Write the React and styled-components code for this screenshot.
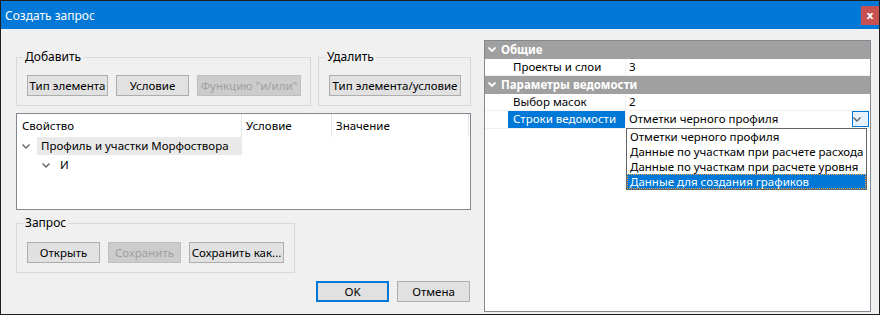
import React from 'react'
import styled, { createGlobalStyle } from 'styled-components'

const GlobalStyle = createGlobalStyle`
    * {
        box-sizing: border-box;
    }

    html, body {
        margin: 0;
        padding: 0;
        background: #f0f0f0;
    }

    body {
        font-family: "Noto Sans", "Open Sans", sans-serif;
        font-size: 11.5px;
        color: #000;
    }
`

const Window = styled.div`
    display: flex;
    flex-direction: column;
    width: 880px;
    height: 315px;
    border: 1px solid #1e1e1e;
    background: #f0f0f0;
`

const TitleBar = styled.div`
    display: flex;
    align-items: center;
    justify-content: space-between;
    height: 28px;
    padding-left: 4px;
    background: #0078d7;
`

const Title = styled.span`
    color: #fff;
    font-size: 12px;
`

const CloseButton = styled.div`
    display: flex;
    align-items: center;
    justify-content: center;
    width: 18px;
    height: 19px;
    margin-top: 1px;
    background: #c75050;
    color: #fff;
    font: bold 11px "DejaVu Sans", sans-serif;
`

const Body = styled.div`
    display: flex;
    gap: 13px;
    flex: 1;
    padding: 11px 8px 0 15px;
`

const LeftColumn = styled.div`
    display: flex;
    flex-direction: column;
    width: 455px;
    padding-top: 9px;
`

const GroupRow = styled.div`
    display: flex;
    gap: 7px;
`

const Group = styled.fieldset`
    display: flex;
    gap: 8px;
    width: ${(p) => p.$width}px;
    min-width: 0;
    margin: ${(p) => p.$top || 0}px 0 0;
    padding: ${(p) => p.$padTop || 10}px 0 9px 10px;
    border: 1px solid #d9d9d9;
`

const Legend = styled.legend`
    margin-left: -4px;
    padding: 0 2px;
    font-size: 12px;
    line-height: 16px;
`

const Button = styled.button`
    flex: 0 0 auto;
    width: ${(p) => p.$width}px;
    height: 21px;
    padding: 0;
    border: 1px solid ${(p) => (p.$primary ? '#0078d7' : p.disabled ? '#bfbfbf' : '#adadad')};
    box-shadow: ${(p) => (p.$primary ? 'inset 0 0 0 1px #0078d7' : 'none')};
    background: ${(p) => (p.disabled ? '#cccccc' : '#e1e1e1')};
    color: ${(p) => (p.disabled ? '#a0a0a0' : '#000')};
    font: inherit;
    white-space: nowrap;
    overflow: hidden;
`

const TreeList = styled.div`
    height: 97px;
    margin-top: 7px;
    border: 1px solid #828790;
    background: #fff;
`

const TreeGrid = styled.div`
    display: grid;
    grid-template-columns: 225px 90px 137px 1fr;
    height: ${(p) => p.$height}px;
`

const HeaderCell = styled.div`
    display: flex;
    align-items: center;
    padding-left: ${(p) => (p.$first ? 5 : 4)}px;
    border-right: ${(p) => (p.$plain ? 'none' : '1px solid #e5e5e5')};
`

const NodeCell = styled.div`
    display: flex;
    align-items: center;
    padding-left: ${(p) => p.$indent}px;
`

const Expander = styled.svg`
    flex: 0 0 auto;
    width: 8px;
    height: 5px;
    margin-right: 7px;
`

const NodeLabel = styled.span`
    flex: 1;
    height: 18px;
    padding-left: ${(p) => p.$pad}px;
    line-height: 18px;
    background: ${(p) => (p.$hot ? '#e9e9e9' : 'transparent')};
`

const Footer = styled.div`
    display: flex;
    justify-content: flex-end;
    gap: 8px;
    margin-top: 8px;
    padding-right: 1px;
`

const PropertyPanel = styled.div`
    width: 387px;
    height: 272px;
    border: 1px solid #828790;
    background: #fff;
`

const CategoryRow = styled.div`
    display: flex;
    align-items: center;
    gap: 5px;
    height: 17.5px;
    padding-left: 3px;
    background: #a0a0a0;
    color: #fff;
    font-weight: bold;
`

const PropRow = styled.div`
    display: grid;
    grid-template-columns: 141px 1fr;
    height: 17.5px;
    border-bottom: 1px solid #f0f0f0;
`

const PropName = styled.div`
    display: flex;
    padding-left: 23px;
    border-right: 1px solid #f0f0f0;
`

const PropNameText = styled.span`
    flex: 1;
    padding-left: 5px;
    line-height: 16px;
    background: ${(p) => (p.$selected ? '#0078d7' : 'transparent')};
    color: ${(p) => (p.$selected ? '#fff' : '#000')};
`

const PropValue = styled.div`
    position: relative;
    display: flex;
    align-items: center;
    padding-left: 3px;
    line-height: 16px;
`

const ValueText = styled.span`
    flex: 1;
`

const DropButton = styled.div`
    display: flex;
    align-items: center;
    justify-content: center;
    width: 17px;
    height: 16px;
    margin-right: 1px;
    border: 1px solid #0078d7;
    background: #e5f1fb;
`

const DropList = styled.ul`
    position: absolute;
    top: 100%;
    left: 0;
    z-index: 2;
    width: 241px;
    margin: 0;
    padding: 0;
    list-style: none;
    border: 1px solid #646464;
    background: #fff;
`

const DropItem = styled.li`
    height: 15px;
    padding-left: 3px;
    line-height: 15px;
    white-space: nowrap;
    background: ${(p) => (p.$selected ? '#0078d7' : 'transparent')};
    color: ${(p) => (p.$selected ? '#fff' : '#000')};
    outline: ${(p) => (p.$selected ? '1px dotted #f0a040' : 'none')};
    outline-offset: -1px;
`

const Chevron = ({ color = '#606060', bold }) => (
    <Expander viewBox="0 0 8 5" style={bold ? { marginRight: 0 } : undefined}>
        <path d="M0.5 0.5 L4 4 L7.5 0.5" fill="none" stroke={color} strokeWidth={bold ? 1.8 : 1.3} />
    </Expander>
)

const stringOptions = [
    'Отметки черного профиля',
    'Данные по участкам при расчете расхода',
    'Данные по участкам при расчете уровня',
    'Данные для создания графиков'
]

export default function App() {
    return (
        <>
            <GlobalStyle />
            <Window>
                <TitleBar>
                    <Title>Создать запрос</Title>
                    <CloseButton>x</CloseButton>
                </TitleBar>
                <Body>
                    <LeftColumn>
                        <GroupRow>
                            <Group $width={295}>
                                <Legend>Добавить</Legend>
                                <Button $width={81}>Тип элемента</Button>
                                <Button $width={73}>Условие</Button>
                                <Button $width={104} disabled>Функцию "и/или"</Button>
                            </Group>
                            <Group $width={153}>
                                <Legend>Удалить</Legend>
                                <Button $width={132}>Тип элемента/условие</Button>
                            </Group>
                        </GroupRow>

                        <TreeList>
                            <TreeGrid $height={23}>
                                <HeaderCell $first>Свойство</HeaderCell>
                                <HeaderCell>Условие</HeaderCell>
                                <HeaderCell>Значение</HeaderCell>
                                <HeaderCell $plain />
                            </TreeGrid>
                            <TreeGrid $height={18}>
                                <NodeCell $indent={5}>
                                    <Chevron />
                                    <NodeLabel $pad={4} $hot>Профиль и участки Морфоствора</NodeLabel>
                                </NodeCell>
                            </TreeGrid>
                            <TreeGrid $height={20}>
                                <NodeCell $indent={25}>
                                    <Chevron />
                                    <NodeLabel $pad={3}>И</NodeLabel>
                                </NodeCell>
                            </TreeGrid>
                        </TreeList>

                        <Group $width={279} $top={5} $padTop={11}>
                            <Legend>Запрос</Legend>
                            <Button $width={73}>Открыть</Button>
                            <Button $width={73} disabled>Сохранить</Button>
                            <Button $width={95}>Сохранить как...</Button>
                        </Group>

                        <Footer>
                            <Button $width={73} $primary>OK</Button>
                            <Button $width={73}>Отмена</Button>
                        </Footer>
                    </LeftColumn>

                    <PropertyPanel>
                        <CategoryRow>
                            <Chevron color="#fff" bold />
                            Общие
                        </CategoryRow>
                        <PropRow>
                            <PropName><PropNameText>Проекты и слои</PropNameText></PropName>
                            <PropValue>3</PropValue>
                        </PropRow>
                        <CategoryRow>
                            <Chevron color="#fff" bold />
                            Параметры ведомости
                        </CategoryRow>
                        <PropRow>
                            <PropName><PropNameText>Выбор масок</PropNameText></PropName>
                            <PropValue>2</PropValue>
                        </PropRow>
                        <PropRow>
                            <PropName><PropNameText $selected>Строки ведомости</PropNameText></PropName>
                            <PropValue>
                                <ValueText>Отметки черного профиля</ValueText>
                                <DropButton>
                                    <Chevron color="#606060" />
                                </DropButton>
                                <DropList>
                                    {stringOptions.map((option, i) => (
                                        <DropItem key={option} $selected={i === stringOptions.length - 1}>
                                            {option}
                                        </DropItem>
                                    ))}
                                </DropList>
                            </PropValue>
                        </PropRow>
                    </PropertyPanel>
                </Body>
            </Window>
        </>
    )
}
